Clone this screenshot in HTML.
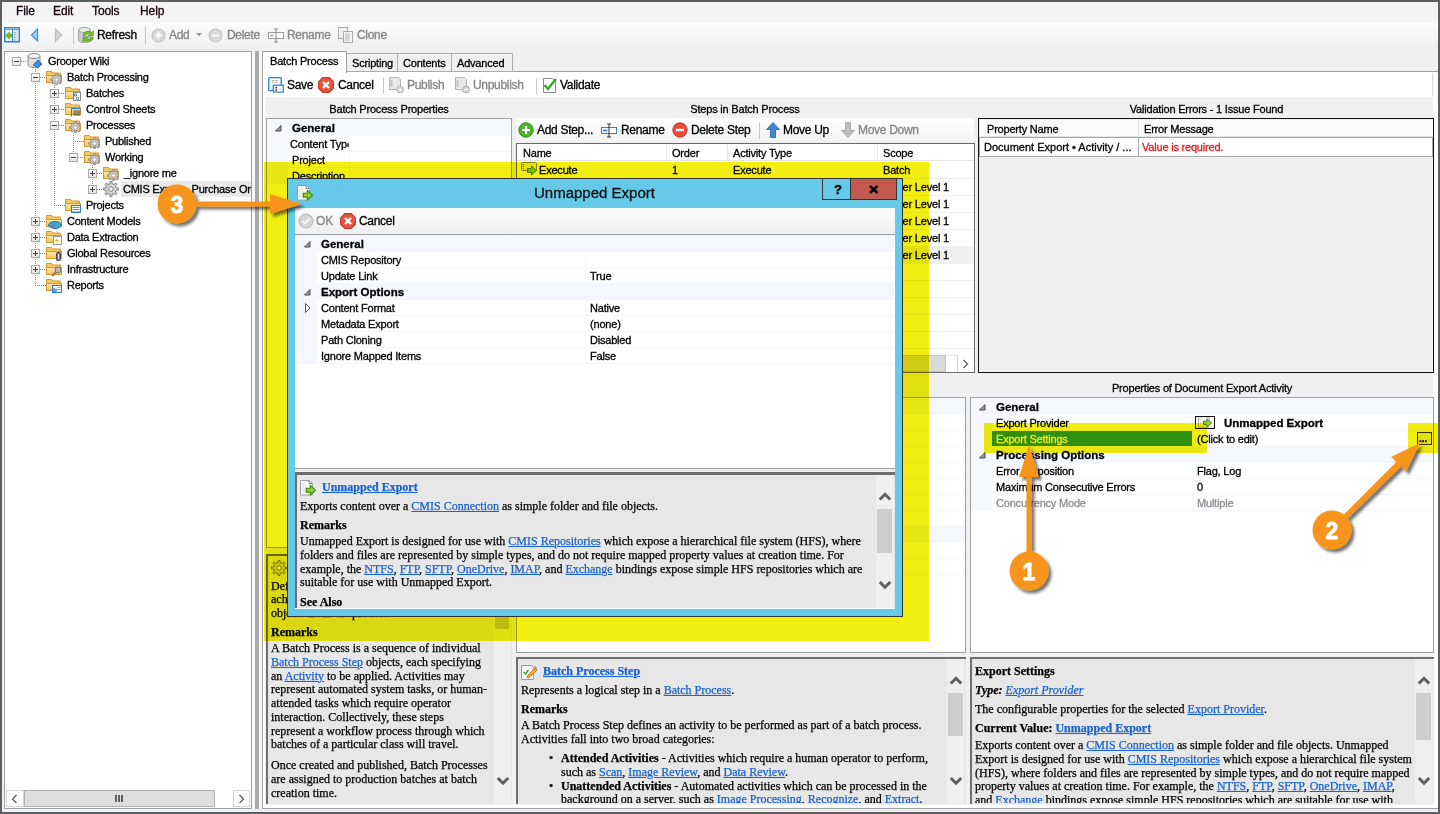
<!DOCTYPE html>
<html><head><meta charset="utf-8"><style>
*{margin:0;padding:0;box-sizing:border-box}
html,body{width:1440px;height:814px;overflow:hidden}
body{position:relative;background:#5d5e61;font-family:"Liberation Sans",sans-serif;font-size:11px;color:#000}
.a{position:absolute}
.t{position:absolute;white-space:nowrap;line-height:16px;letter-spacing:-0.2px;-webkit-text-stroke:0.3px currentColor}
.b{font-weight:bold;letter-spacing:0;font-size:11.5px}
.g{color:#858585}
.s{position:absolute;white-space:nowrap;font-family:"Liberation Serif",serif;font-size:12px;line-height:13.75px;letter-spacing:0;-webkit-text-stroke:0.25px currentColor}
.lk{color:#1a62cf;text-decoration:underline}
svg{position:absolute;overflow:visible}
.exp{position:absolute;width:9px;height:9px;border:1px solid #a8a8a8;background:linear-gradient(#fdfdfd,#e6e6e6)}
.exp:before{content:"";position:absolute;left:1px;top:3px;width:5px;height:1px;background:#3c3c3c}
.exp.p:after{content:"";position:absolute;left:3px;top:1px;width:1px;height:5px;background:#3c3c3c}
.dv{position:absolute;width:1px;background-image:linear-gradient(#8a8a8a 50%,transparent 50%);background-size:1px 2px}
.dh{position:absolute;height:1px;background-image:linear-gradient(90deg,#8a8a8a 50%,transparent 50%);background-size:2px 1px}
.sep{position:absolute;width:1px;background:#c8c8c8}
.help{position:absolute;background:#e7e7e7;border-top:2px solid #6e6e6e;border-left:2px solid #6e6e6e;overflow:hidden}
.tri{position:absolute;width:0;height:0}
</style></head><body>

<svg width="0" height="0" style="position:absolute">
<defs>
<linearGradient id="fold" x1="0" y1="0" x2="0" y2="1"><stop offset="0" stop-color="#fde9a8"/><stop offset="1" stop-color="#f3c15c"/></linearGradient>
<symbol id="folder" viewBox="0 0 16 16">
 <path d="M0.5,2.5 h5 l1.5,1.5 h7.5 v9.5 h-14z" fill="#f4c766" stroke="#d29a33"/>
 <path d="M0.5,6.5 h15 v7 h-15z" fill="url(#fold)" stroke="#d29a33"/>
</symbol>
<symbol id="gearov" viewBox="0 0 16 16">
 <path d="M9.68,6.38 L9.77,4.75 L11.23,4.75 L11.32,6.38 L12.83,7.01 L14.05,5.92 L15.08,6.95 L13.99,8.17 L14.62,9.68 L16.25,9.77 L16.25,11.23 L14.62,11.32 L13.99,12.83 L15.08,14.05 L14.05,15.08 L12.83,13.99 L11.32,14.62 L11.23,16.25 L9.77,16.25 L9.68,14.62 L8.17,13.99 L6.95,15.08 L5.92,14.05 L7.01,12.83 L6.38,11.32 L4.75,11.23 L4.75,9.77 L6.38,9.68 L7.01,8.17 L5.92,6.95 L6.95,5.92 L8.17,7.01Z" fill="#c9c9c9" stroke="#7e7e7e" stroke-width="0.8"/>
 <circle cx="10.5" cy="10.5" r="1.8" fill="#fff" stroke="#8a8a8a" stroke-width="0.6"/>
</symbol>
<symbol id="gearred" viewBox="0 0 16 16">
 <path d="M9.68,6.38 L9.77,4.75 L11.23,4.75 L11.32,6.38 L12.83,7.01 L14.05,5.92 L15.08,6.95 L13.99,8.17 L14.62,9.68 L16.25,9.77 L16.25,11.23 L14.62,11.32 L13.99,12.83 L15.08,14.05 L14.05,15.08 L12.83,13.99 L11.32,14.62 L11.23,16.25 L9.77,16.25 L9.68,14.62 L8.17,13.99 L6.95,15.08 L5.92,14.05 L7.01,12.83 L6.38,11.32 L4.75,11.23 L4.75,9.77 L6.38,9.68 L7.01,8.17 L5.92,6.95 L6.95,5.92 L8.17,7.01Z" fill="#c9c9c9" stroke="#7e7e7e" stroke-width="0.8"/>
 <circle cx="10.5" cy="10.5" r="1.8" fill="#fff" stroke="#8a8a8a" stroke-width="0.6"/><path d="M9,14 h3" stroke="#e07040" stroke-width="1.2"/>
</symbol>
<symbol id="gear" viewBox="0 0 16 16">
 <path d="M6.95,2.70 L7.05,0.46 L8.95,0.46 L9.05,2.70 L11.00,3.51 L12.66,1.99 L14.01,3.34 L12.49,5.00 L13.30,6.95 L15.54,7.05 L15.54,8.95 L13.30,9.05 L12.49,11.00 L14.01,12.66 L12.66,14.01 L11.00,12.49 L9.05,13.30 L8.95,15.54 L7.05,15.54 L6.95,13.30 L5.00,12.49 L3.34,14.01 L1.99,12.66 L3.51,11.00 L2.70,9.05 L0.46,8.95 L0.46,7.05 L2.70,6.95 L3.51,5.00 L1.99,3.34 L3.34,1.99 L5.00,3.51Z" fill="#d6d6d6" stroke="#7a7a7a" stroke-width="1"/>
 <circle cx="8" cy="8" r="2.3" fill="#fff" stroke="#7a7a7a" stroke-width="1"/>
</symbol>
<symbol id="db" viewBox="0 0 16 16">
 <path d="M1.5,3 v9 a6,2.5 0 0 0 12,0 v-9" fill="#dcdcdc" stroke="#8b8b8b"/>
 <ellipse cx="7.5" cy="3" rx="6" ry="2.5" fill="#efefef" stroke="#8b8b8b"/>
 <path d="M9,9 l4,-3 l2.5,2.5 l-3,4z" fill="#3c8fdc" stroke="#1e6bb8" stroke-width="0.8"/>
</symbol>
<symbol id="nav" viewBox="0 0 16 16">
 <rect x="0.75" y="0.75" width="14.5" height="14" fill="#fff" stroke="#2a86cf" stroke-width="1.5"/>
 <path d="M2,2.5 h12" stroke="#2a86cf" stroke-width="0.8"/>
 <rect x="9" y="3" width="5" height="11" fill="#e4e4e4"/>
 <path d="M8.5,2 v13" stroke="#2a86cf" stroke-width="1"/>
 <path d="M11,5 v1 M11,7.5 v1 M11,10 v1 M11,12.5 v1" stroke="#555" stroke-width="0.8"/>
 <path d="M1.5,8.5 l4,-4 v2.5 h2.5 v3 h-2.5 v2.5z" fill="#7cc11f" stroke="#5a9a10" stroke-width="0.5"/>
</symbol>
<symbol id="refresh" viewBox="0 0 16 16">
 <path d="M0.5,3 v10 a6,2.5 0 0 0 12,0 v-10" fill="#cfd3d8" stroke="#9aa0a6"/>
 <ellipse cx="6.5" cy="3" rx="6" ry="2.5" fill="#e9ecef" stroke="#9aa0a6"/>
 <path d="M0.5,7 a6,2.5 0 0 0 12,0 M0.5,10 a6,2.5 0 0 0 12,0" fill="none" stroke="#b0b5ba" stroke-width="0.6"/>
 <path d="M5,8.5 a5,4.5 0 0 1 8.5,-3 l1.8,-1.8 v5.3 h-5.3 l1.8,-1.8 a2.8,2.5 0 0 0 -4.6,1.3z" fill="#72c124" stroke="#4a9412" stroke-width="0.6"/>
 <path d="M15.3,10.5 a5,4.5 0 0 1 -8.5,3 l-1.8,1.8 v-5.3 h5.3 l-1.8,1.8 a2.8,2.5 0 0 0 4.6,-1.3z" fill="#72c124" stroke="#4a9412" stroke-width="0.6"/>
</symbol>
<symbol id="gplus" viewBox="0 0 16 16">
 <circle cx="8" cy="8" r="7" fill="#d9d9d9" stroke="#bdbdbd"/>
 <path d="M8,4.5 v7 M4.5,8 h7" stroke="#fff" stroke-width="2"/>
</symbol>
<symbol id="gminus" viewBox="0 0 16 16">
 <circle cx="8" cy="8" r="7" fill="#d9d9d9" stroke="#bdbdbd"/>
 <path d="M4.5,8 h7" stroke="#fff" stroke-width="2"/>
</symbol>
<symbol id="rename" viewBox="0 0 16 16">
 <rect x="0.5" y="5.5" width="15" height="6" fill="#fff" stroke="#9a9a9a"/>
 <path d="M8,2 v13 M6,2 h4 M6,15 h4" stroke="#8a8a8a"/>
 <path d="M2,7.5 h4 v2 h-4z" fill="#bbb"/>
</symbol>
<symbol id="renameb" viewBox="0 0 16 16">
 <rect x="0.5" y="5.5" width="15" height="6" fill="#fff" stroke="#3a7cc9"/>
 <path d="M8,2 v13 M6,2 h4 M6,15 h4" stroke="#333"/>
 <path d="M2,7.5 h4.5 v2 h-4.5z" fill="#4a90e2"/>
</symbol>
<symbol id="clone" viewBox="0 0 16 16">
 <rect x="0.5" y="0.5" width="9" height="11" fill="#f2f2f2" stroke="#aaa"/>
 <rect x="5.5" y="4.5" width="9" height="11" fill="#f2f2f2" stroke="#aaa"/>
 <path d="M7,7 h5 M7,9 h5 M7,11 h5 M7,13 h4" stroke="#bbb"/>
</symbol>
<symbol id="save" viewBox="0 0 16 16">
 <rect x="0.7" y="0.7" width="12.6" height="13" rx="1" fill="#e4f0fa" stroke="#2a86cf" stroke-width="1.3"/>
 <rect x="2.5" y="1.8" width="8.5" height="5" fill="#fff"/>
 <path d="M3.5,3.5 h3 M7.5,3.5 h2 M3.5,5.2 h2 M6.5,5.2 h3" stroke="#888" stroke-width="0.7"/>
 <rect x="5.3" y="8.3" width="10" height="6.8" fill="#fff" stroke="#2a86cf" stroke-width="1.2"/>
 <path d="M7.2,10.5 h2 M8.2,10.5 v3 M7.2,13.5 h2" stroke="#333" stroke-width="0.8"/>
 <path d="M10,12 h4" stroke="#ccc" stroke-width="0.8"/>
</symbol>
<symbol id="cancel" viewBox="0 0 16 16">
 <path d="M4.8,0.6 h6.4 l4.2,4.2 v6.4 l-4.2,4.2 h-6.4 l-4.2,-4.2 v-6.4z" fill="#e8533f" stroke="#c53a2a" stroke-width="1.1"/>
 <path d="M5,5 l6,6 M11,5 l-6,6" stroke="#fff" stroke-width="2.3"/>
</symbol>
<symbol id="publish" viewBox="0 0 16 16">
 <path d="M1.5,0.5 h9 l2,2 v10 h-11z" fill="#e9e9e9" stroke="#b0b0b0"/>
 <path d="M3.5,3 v7" stroke="#c3c3c3" stroke-width="2"/>
 <circle cx="12" cy="12.5" r="3.5" fill="#d2d2d2" stroke="#b5b5b5"/>
 <path d="M12,10.5 v4 M10,12.5 h4" stroke="#fff" stroke-width="1.2"/>
</symbol>
<symbol id="unpublish" viewBox="0 0 16 16">
 <path d="M1.5,0.5 h9 l2,2 v10 h-11z" fill="#e9e9e9" stroke="#b0b0b0"/>
 <path d="M3.5,3 v7" stroke="#c3c3c3" stroke-width="2"/>
 <circle cx="12" cy="12.5" r="3.5" fill="#d2d2d2" stroke="#b5b5b5"/>
 <path d="M10,12.5 h4" stroke="#fff" stroke-width="1.2"/>
</symbol>
<symbol id="validate" viewBox="0 0 16 16">
 <path d="M1.5,1.5 h9 l3,3 v11 h-12z" fill="#fff" stroke="#8a8a8a"/>
 <path d="M2.5,8 l3.5,4 l8,-10" fill="none" stroke="#3aa12e" stroke-width="2.4"/>
</symbol>
<symbol id="addstep" viewBox="0 0 16 16">
 <circle cx="8" cy="8" r="7.2" fill="#4fb52c" stroke="#2f8f16"/>
 <path d="M8,4 v8 M4,8 h8" stroke="#fff" stroke-width="2.2"/>
</symbol>
<symbol id="delstep" viewBox="0 0 16 16">
 <circle cx="8" cy="8" r="7.2" fill="#e74c3c" stroke="#c0392b"/>
 <path d="M4,8 h8" stroke="#fff" stroke-width="2.4"/>
</symbol>
<symbol id="moveup" viewBox="0 0 16 16">
 <path d="M8,0.5 l6.5,7 h-4 v8 h-5 v-8 h-4z" fill="#3f86d6" stroke="#1f5fa8" stroke-width="0.8"/>
</symbol>
<symbol id="movedown" viewBox="0 0 16 16">
 <path d="M8,15.5 l6.5,-7 h-4 v-8 h-5 v8 h-4z" fill="#bdbdbd" stroke="#a0a0a0" stroke-width="0.8"/>
</symbol>
<symbol id="execute" viewBox="0 0 16 16">
 <rect x="0.5" y="0.5" width="15" height="8" rx="1" fill="#f2f2f2" stroke="#8a8a8a"/>
 <circle cx="2.3" cy="2.3" r="0.6" fill="#555"/><circle cx="2.3" cy="4.4" r="0.6" fill="#555"/><circle cx="2.3" cy="6.5" r="0.6" fill="#555"/>
 <path d="M6.5,6.5 h4 v-2.5 l5,4.5 l-5,4.5 v-2.5 h-4z" fill="#8dc63f" stroke="#3f8a12" stroke-width="1"/>
</symbol>
<symbol id="export" viewBox="0 0 16 16">
 <path d="M0.5,0.5 h9 l3,3 v11.5 h-12z" fill="#fbfbfb" stroke="#9d9d9d"/>
 <rect x="2" y="2" width="4" height="11" fill="#ececec"/>
 <path d="M9,1 v2.5 h3" fill="none" stroke="#777" stroke-width="0.9"/>
 <path d="M6.3,8.3 h4 v-2.8 l5.2,4.7 l-5.2,4.7 v-2.8 h-4z" fill="#9ad12a" stroke="#2f8a0e" stroke-width="1.1"/>
</symbol>
<symbol id="pencildoc" viewBox="0 0 16 16">
 <path d="M0.5,1.5 h10 l2,2 v12 h-12z" fill="#fafafa" stroke="#9a9a9a"/>
 <path d="M2.5,8 l2,2 l3,-4" fill="none" stroke="#3aa12e" stroke-width="1.4"/>
 <path d="M6,14 l1,-3 l7,-7 l2,2 l-7,7z" fill="#f4a23a" stroke="#b86f15" stroke-width="0.7"/>
 <path d="M13,3 l2,2 l1,-1 l-2,-2z" fill="#e0608a"/>
</symbol>
<symbol id="okg" viewBox="0 0 16 16">
 <circle cx="8" cy="8" r="7" fill="#d5d5d5" stroke="#b5b5b5"/>
 <path d="M4.5,8 l2.5,2.5 l4.5,-5" fill="none" stroke="#fff" stroke-width="1.8"/>
</symbol>
<symbol id="dbwiki" viewBox="0 0 16 16">
 <path d="M1,3 v9 a6,2.5 0 0 0 12,0 v-9" fill="#e0e0e0" stroke="#8b8b8b"/>
 <ellipse cx="7" cy="3" rx="6" ry="2.5" fill="#f3f3f3" stroke="#8b8b8b"/>
 <path d="M6,12 l5,-5 l4,4 l-4,4z" fill="#3a90e0" stroke="#1c62ae" stroke-width="0.8"/>
</symbol>
<symbol id="ov_batch" viewBox="0 0 16 16">
 <rect x="8.5" y="7.5" width="7" height="8" fill="#fff" stroke="#888"/>
 <circle cx="10.5" cy="10" r="1.2" fill="none" stroke="#2a78d0"/>
 <circle cx="12.5" cy="13.5" r="1.2" fill="none" stroke="#2a78d0"/>
</symbol>
<symbol id="ov_ctrl" viewBox="0 0 16 16">
 <path d="M6.5,15.5 v-8 h9" fill="none" stroke="#2a78d0"/>
 <path d="M8.5,10 h7 M8.5,12 h7 M8.5,14 h7" stroke="#444"/>
</symbol>
<symbol id="ov_proj" viewBox="0 0 16 16">
 <rect x="6.5" y="8.5" width="9" height="7" fill="#fff" stroke="#2a78d0"/>
 <path d="M7.5,10.5 h7 M7.5,12.5 h7" stroke="#5a8fd0"/>
 <path d="M7.5,14.5 h7" stroke="#d05050" stroke-dasharray="1 1"/>
</symbol>
<symbol id="ov_cm" viewBox="0 0 16 16">
 <ellipse cx="9" cy="12" rx="6.5" ry="3.5" fill="#3fa7d8" stroke="#1c7ab0"/>
 <path d="M5,13 h4" stroke="#d04040"/>
</symbol>
<symbol id="ov_de" viewBox="0 0 16 16">
 <rect x="7.5" y="7.5" width="8" height="8" fill="#fff" stroke="#999"/>
 <path d="M12,8 l-3,4 h2 l-1,3 l3,-4 h-2z" fill="#f0b020"/>
</symbol>
<symbol id="ov_gr" viewBox="0 0 16 16">
 <rect x="10.5" y="7.5" width="4" height="8" rx="1" fill="#777" stroke="#444"/>
 <path d="M12.5,9 v5" stroke="#ddd"/>
</symbol>
<symbol id="ov_inf" viewBox="0 0 16 16">
 <path d="M6,15 l5,-5" stroke="#b07a3a" stroke-width="2.4"/>
 <circle cx="12" cy="9" r="3" fill="#bbb" stroke="#777"/>
</symbol>
<symbol id="ov_rep" viewBox="0 0 16 16">
 <rect x="6.5" y="8.5" width="9" height="7" fill="#fff" stroke="#2a78d0"/>
 <path d="M8,11 v4 M10,12 v3" stroke="#2a78d0" stroke-width="1.4"/>
 <path d="M11.5,10.5 h3 M11.5,12.5 h3" stroke="#999"/>
</symbol>
</defs></svg>
<div class="a" style="left:2px;top:2px;width:1436px;height:810px;background:#f0f0f0"></div>
<div class="a" style="left:2px;top:2px;width:1436px;height:21px;background:#f4f4f4"></div>
<div class="a" style="left:2px;top:23px;width:1436px;height:25px;background:linear-gradient(#fbfbfb,#f0f0f0)"></div>
<div class="t" style="left:16px;top:2px;line-height:18px;font-size:12px;letter-spacing:-0.1px;color:#1a0010">File</div>
<div class="t" style="left:53px;top:2px;line-height:18px;font-size:12px;letter-spacing:-0.1px;color:#1a0010">Edit</div>
<div class="t" style="left:92px;top:2px;line-height:18px;font-size:12px;letter-spacing:-0.1px;color:#1a0010">Tools</div>
<div class="t" style="left:140px;top:2px;line-height:18px;font-size:12px;letter-spacing:-0.1px;color:#1a0010">Help</div>
<svg style="left:4px;top:27px" width="16" height="16"><use href="#nav"/></svg>
<svg style="left:30px;top:28px" width="10" height="15"><path d="M7.5,1 v12 l-6,-6z" fill="#a9d0f2" stroke="#3f8fd8" stroke-width="1.2"/></svg>
<svg style="left:54px;top:28px" width="10" height="15"><path d="M1.5,1 v12 l6,-6z" fill="#d5d5d5" stroke="#bdbdbd" stroke-width="1.2"/></svg>
<div class="a" style="left:73px;top:27px;width:1px;height:17px;background:#c5c5c5"></div>
<svg style="left:78px;top:27px" width="16" height="16"><use href="#refresh"/></svg>
<div class="t" style="left:97px;top:27px;font-size:12px;letter-spacing:-0.3px">Refresh</div>
<div class="a" style="left:145px;top:27px;width:1px;height:17px;background:#c5c5c5"></div>
<svg style="left:151px;top:28px" width="15" height="15"><use href="#gplus"/></svg>
<div class="t g" style="left:169px;top:27px;font-size:12px;letter-spacing:-0.3px">Add</div>
<svg style="left:196px;top:33px" width="7" height="4"><path d="M0,0 h6 l-3,3z" fill="#909090"/></svg>
<svg style="left:208px;top:28px" width="15" height="15"><use href="#gminus"/></svg>
<div class="t g" style="left:227px;top:27px;font-size:12px;letter-spacing:-0.3px">Delete</div>
<svg style="left:268px;top:27px" width="16" height="16"><use href="#rename"/></svg>
<div class="t g" style="left:287px;top:27px;font-size:12px;letter-spacing:-0.3px">Rename</div>
<svg style="left:338px;top:27px" width="16" height="16"><use href="#clone"/></svg>
<div class="t g" style="left:357px;top:27px;font-size:12px;letter-spacing:-0.3px">Clone</div>
<div class="a" style="left:4px;top:51px;width:248px;height:758px;background:#fff;border:1px solid #9fa3a9"></div>
<div class="a" style="left:5px;top:790px;width:246px;height:17px;background:#fff"></div>
<div class="a" style="left:6px;top:790px;width:18px;height:17px;border:1px solid #d4d4d4;background:#fff"></div>
<svg style="left:11px;top:794px" width="8" height="10"><path d="M5.5,1 l-4,4 l4,4" fill="none" stroke="#606060" stroke-width="1.4"/></svg>
<div class="a" style="left:24px;top:790px;width:191px;height:17px;border:1px solid #b0b0b0;background:#dedede"></div>
<div class="a" style="left:115px;top:795px;width:2px;height:7px;background:#606060"></div>
<div class="a" style="left:118px;top:795px;width:2px;height:7px;background:#606060"></div>
<div class="a" style="left:121px;top:795px;width:2px;height:7px;background:#606060"></div>
<div class="a" style="left:233px;top:790px;width:17px;height:17px;border:1px solid #d4d4d4;background:#fff"></div>
<svg style="left:238px;top:794px" width="8" height="10"><path d="M1.5,1 l4,4 l-4,4" fill="none" stroke="#606060" stroke-width="1.4"/></svg>
<div class="a" style="left:121px;top:181px;width:130px;height:16px;background:#e9e9e9"></div>
<div class="dv" style="left:35px;top:69px;height:217px"></div>
<div class="dv" style="left:54px;top:85px;height:121px"></div>
<div class="dv" style="left:73px;top:133px;height:25px"></div>
<div class="dv" style="left:92px;top:165px;height:25px"></div>
<div class="dh" style="left:21px;top:61px;width:6px"></div>
<div class="exp" style="left:12px;top:57px"></div>
<svg style="left:27px;top:53px" width="16" height="16"><use href="#dbwiki"/></svg>
<div class="t" style="left:48px;top:53px;letter-spacing:-0.25px">Grooper Wiki</div>
<div class="dh" style="left:40px;top:77px;width:6px"></div>
<div class="exp" style="left:31px;top:73px"></div>
<svg style="left:46px;top:69px" width="16" height="16"><use href="#folder"/></svg>
<svg style="left:46px;top:69px" width="16" height="16"><use href="#gearov"/></svg>
<div class="t" style="left:67px;top:69px;letter-spacing:-0.25px">Batch Processing</div>
<div class="dh" style="left:59px;top:93px;width:6px"></div>
<div class="exp p" style="left:50px;top:89px"></div>
<svg style="left:65px;top:85px" width="16" height="16"><use href="#folder"/></svg>
<svg style="left:65px;top:85px" width="16" height="16"><use href="#ov_batch"/></svg>
<div class="t" style="left:86px;top:85px;letter-spacing:-0.25px">Batches</div>
<div class="dh" style="left:59px;top:109px;width:6px"></div>
<div class="exp p" style="left:50px;top:105px"></div>
<svg style="left:65px;top:101px" width="16" height="16"><use href="#folder"/></svg>
<svg style="left:65px;top:101px" width="16" height="16"><use href="#ov_ctrl"/></svg>
<div class="t" style="left:86px;top:101px;letter-spacing:-0.25px">Control Sheets</div>
<div class="dh" style="left:59px;top:125px;width:6px"></div>
<div class="exp" style="left:50px;top:121px"></div>
<svg style="left:65px;top:117px" width="16" height="16"><use href="#folder"/></svg>
<svg style="left:65px;top:117px" width="16" height="16"><use href="#gearred"/></svg>
<div class="t" style="left:86px;top:117px;letter-spacing:-0.25px">Processes</div>
<div class="dh" style="left:73px;top:141px;width:11px"></div>
<svg style="left:84px;top:133px" width="16" height="16"><use href="#folder"/></svg>
<svg style="left:84px;top:133px" width="16" height="16"><use href="#gearred"/></svg>
<div class="t" style="left:105px;top:133px;letter-spacing:-0.25px">Published</div>
<div class="dh" style="left:78px;top:157px;width:6px"></div>
<div class="exp" style="left:69px;top:153px"></div>
<svg style="left:84px;top:149px" width="16" height="16"><use href="#folder"/></svg>
<svg style="left:84px;top:149px" width="16" height="16"><use href="#gearred"/></svg>
<div class="t" style="left:105px;top:149px;letter-spacing:-0.25px">Working</div>
<div class="dh" style="left:97px;top:173px;width:6px"></div>
<div class="exp p" style="left:88px;top:169px"></div>
<svg style="left:103px;top:165px" width="16" height="16"><use href="#folder"/></svg>
<svg style="left:103px;top:165px" width="16" height="16"><use href="#gearred"/></svg>
<div class="t" style="left:124px;top:165px;letter-spacing:-0.25px">_ignore me</div>
<div class="dh" style="left:97px;top:189px;width:6px"></div>
<div class="exp p" style="left:88px;top:185px"></div>
<svg style="left:103px;top:181px" width="16" height="16"><use href="#gear"/></svg>
<div class="t" style="left:123px;top:181px;letter-spacing:-0.25px;width:128px;overflow:hidden">CMIS Export - Purchase Orders</div>
<div class="dh" style="left:54px;top:205px;width:11px"></div>
<svg style="left:65px;top:197px" width="16" height="16"><use href="#folder"/></svg>
<svg style="left:65px;top:197px" width="16" height="16"><use href="#ov_proj"/></svg>
<div class="t" style="left:86px;top:197px;letter-spacing:-0.25px">Projects</div>
<div class="dh" style="left:40px;top:221px;width:6px"></div>
<div class="exp p" style="left:31px;top:217px"></div>
<svg style="left:46px;top:213px" width="16" height="16"><use href="#folder"/></svg>
<svg style="left:46px;top:213px" width="16" height="16"><use href="#ov_cm"/></svg>
<div class="t" style="left:67px;top:213px;letter-spacing:-0.25px">Content Models</div>
<div class="dh" style="left:40px;top:237px;width:6px"></div>
<div class="exp p" style="left:31px;top:233px"></div>
<svg style="left:46px;top:229px" width="16" height="16"><use href="#folder"/></svg>
<svg style="left:46px;top:229px" width="16" height="16"><use href="#ov_de"/></svg>
<div class="t" style="left:67px;top:229px;letter-spacing:-0.25px">Data Extraction</div>
<div class="dh" style="left:40px;top:253px;width:6px"></div>
<div class="exp p" style="left:31px;top:249px"></div>
<svg style="left:46px;top:245px" width="16" height="16"><use href="#folder"/></svg>
<svg style="left:46px;top:245px" width="16" height="16"><use href="#ov_gr"/></svg>
<div class="t" style="left:67px;top:245px;letter-spacing:-0.25px">Global Resources</div>
<div class="dh" style="left:40px;top:269px;width:6px"></div>
<div class="exp p" style="left:31px;top:265px"></div>
<svg style="left:46px;top:261px" width="16" height="16"><use href="#folder"/></svg>
<svg style="left:46px;top:261px" width="16" height="16"><use href="#ov_inf"/></svg>
<div class="t" style="left:67px;top:261px;letter-spacing:-0.25px">Infrastructure</div>
<div class="dh" style="left:35px;top:285px;width:11px"></div>
<svg style="left:46px;top:277px" width="16" height="16"><use href="#folder"/></svg>
<svg style="left:46px;top:277px" width="16" height="16"><use href="#ov_rep"/></svg>
<div class="t" style="left:67px;top:277px;letter-spacing:-0.25px">Reports</div>
<div class="a" style="left:251px;top:52px;width:1px;height:700px;background:#9fa3a9"></div>
<div class="a" style="left:255px;top:51px;width:4px;height:758px;background:#a9a9a9"></div>
<div class="a" style="left:252px;top:51px;width:3px;height:758px;background:#f7f7f7"></div>
<div class="a" style="left:259px;top:51px;width:3px;height:758px;background:#f5f5f5"></div>
<div class="a" style="left:262px;top:71px;width:1176px;height:738px;background:#fff;border:1px solid #a0a0a0;border-right:none"></div>
<div class="a" style="left:346px;top:53px;width:52px;height:19px;background:#f0f0f0;border:1px solid #acacac"></div>
<div class="t" style="left:352px;top:55px;">Scripting</div>
<div class="a" style="left:397px;top:53px;width:55px;height:19px;background:#f0f0f0;border:1px solid #acacac"></div>
<div class="t" style="left:403px;top:55px;">Contents</div>
<div class="a" style="left:451px;top:53px;width:62px;height:19px;background:#f0f0f0;border:1px solid #acacac"></div>
<div class="t" style="left:457px;top:55px;">Advanced</div>
<div class="a" style="left:262px;top:51px;width:85px;height:22px;background:#fff;border:1px solid #a0a0a0;border-bottom:none"></div>
<div class="t" style="left:270px;top:53px;">Batch Process</div>
<svg style="left:268px;top:77px" width="16" height="16"><use href="#save"/></svg>
<div class="t" style="left:287px;top:77px;font-size:12px;letter-spacing:-0.3px">Save</div>
<svg style="left:318px;top:77px" width="16" height="16"><use href="#cancel"/></svg>
<div class="t" style="left:338px;top:77px;font-size:12px;letter-spacing:-0.3px">Cancel</div>
<div class="a" style="left:383px;top:78px;width:1px;height:16px;background:#c8c8c8"></div>
<svg style="left:388px;top:77px" width="16" height="16"><use href="#publish"/></svg>
<div class="t g" style="left:407px;top:77px;font-size:12px;letter-spacing:-0.3px">Publish</div>
<svg style="left:454px;top:77px" width="16" height="16"><use href="#unpublish"/></svg>
<div class="t g" style="left:473px;top:77px;font-size:12px;letter-spacing:-0.3px">Unpublish</div>
<div class="a" style="left:536px;top:78px;width:1px;height:16px;background:#c8c8c8"></div>
<svg style="left:542px;top:77px" width="16" height="16"><use href="#validate"/></svg>
<div class="t" style="left:560px;top:77px;font-size:12px;letter-spacing:-0.3px">Validate</div>
<div class="a" style="left:265px;top:97px;width:1168px;height:708px;background:#f0f0f0"></div>
<div class="a" style="left:1432px;top:73px;width:1px;height:23px;background:#d8d8d8"></div>
<div class="t" style="left:266px;top:101px;width:246px;text-align:center">Batch Process Properties</div>
<div class="t" style="left:516px;top:101px;width:458px;text-align:center">Steps in Batch Process</div>
<div class="t" style="left:979px;top:101px;width:455px;text-align:center">Validation Errors - 1 Issue Found</div>
<div class="t" style="left:970px;top:380px;width:464px;text-align:center">Properties of Document Export Activity</div>
<div class="a" style="left:266px;top:118px;width:246px;height:430px;background:#fff;border:1px solid #a0a0a0"></div>
<div class="a" style="left:267px;top:119px;width:21px;height:65px;background:#f4f7fc"></div>
<div class="a" style="left:267px;top:119px;width:244px;height:17px;background:#f4f7fc"></div>
<svg style="left:275px;top:125px" width="7" height="7"><path d="M6,0.5 v5.5 h-5.5z" fill="#9a9a9a" stroke="#404040" stroke-width="0.9"/></svg>
<div class="t b" style="left:292px;top:120px;">General</div>
<div class="a" style="left:288px;top:151px;width:223px;height:1px;background:#f4f7fc"></div>
<div class="a" style="left:349px;top:136px;width:1px;height:15px;background:#f4f7fc"></div>
<div class="t" style="left:292px;top:136px;">Content Typ</div>
<div class="a" style="left:288px;top:167px;width:223px;height:1px;background:#f4f7fc"></div>
<div class="a" style="left:349px;top:152px;width:1px;height:15px;background:#f4f7fc"></div>
<div class="t" style="left:292px;top:152px;">Project</div>
<div class="a" style="left:288px;top:183px;width:223px;height:1px;background:#f4f7fc"></div>
<div class="a" style="left:349px;top:168px;width:1px;height:15px;background:#f4f7fc"></div>
<div class="t" style="left:292px;top:168px;">Description</div>
<div class="a" style="left:290px;top:136px;width:58px;height:15px;background:#fff"></div>
<div class="t" style="left:290px;top:136px;"><span style="display:inline-block;width:58px;overflow:hidden">Content Type</span></div>
<div class="help" style="left:266px;top:554px;width:246px;height:250px"></div>
<div class="a" style="left:494px;top:556px;width:17px;height:248px;background:#efefef"></div>
<div class="a" style="left:495px;top:617px;width:14px;height:12px;background:#c8c8c8"></div>
<svg style="left:497px;top:777px" width="12" height="8"><path d="M0.8,1 l5.2,5.2 l5.2,-5.2" fill="none" stroke="#5e5e5e" stroke-width="3"/></svg>
<svg style="left:271px;top:560px" width="16" height="16"><use href="#gear"/></svg>
<div class="s" style="left:271px;top:580px;line-height:13.4px">Defines a sequence of activities which<br>achieve a processing workflow for batch<br>objects from the process.</div>
<div class="s b" style="left:271px;top:626px">Remarks</div>
<div class="s" style="left:271px;top:642px">A Batch Process is a sequence of individual<br><span class="lk">Batch Process Step</span> objects, each specifying<br>an <span class="lk">Activity</span> to be applied. Activities may<br>represent automated system tasks, or human-<br>attended tasks which require operator<br>interaction. Collectively, these steps<br>represent a workflow process through which<br>batches of a particular class will travel.</div>
<div class="s" style="left:271px;top:759px">Once created and published, Batch Processes<br>are assigned to production batches at batch<br>creation time.</div>
<div class="a" style="left:516px;top:118px;width:458px;height:24px;background:linear-gradient(#fefefe,#f3f3f3);border-radius:2px"></div>
<svg style="left:518px;top:122px" width="16" height="16"><use href="#addstep"/></svg>
<div class="t" style="left:537px;top:122px;font-size:12px;letter-spacing:-0.3px">Add Step...</div>
<svg style="left:601px;top:122px" width="16" height="16"><use href="#renameb"/></svg>
<div class="t" style="left:621px;top:122px;font-size:12px;letter-spacing:-0.3px">Rename</div>
<svg style="left:672px;top:122px" width="16" height="16"><use href="#delstep"/></svg>
<div class="t" style="left:691px;top:122px;font-size:12px;letter-spacing:-0.3px">Delete Step</div>
<div class="a" style="left:759px;top:122px;width:1px;height:17px;background:#c8c8c8"></div>
<svg style="left:765px;top:122px" width="16" height="16"><use href="#moveup"/></svg>
<div class="t" style="left:783px;top:122px;font-size:12px;letter-spacing:-0.3px">Move Up</div>
<svg style="left:840px;top:122px" width="16" height="16"><use href="#movedown"/></svg>
<div class="t g" style="left:858px;top:122px;font-size:12px;letter-spacing:-0.3px">Move Down</div>
<div class="a" style="left:516px;top:143px;width:459px;height:230px;background:#fff;border:1px solid #6a6a6a"></div>
<div class="a" style="left:517px;top:144px;width:457px;height:17px;background:#fff;border-bottom:1px solid #e5e5e5"></div>
<div class="a" style="left:666px;top:144px;width:1px;height:17px;background:#e5e5e5"></div>
<div class="a" style="left:727px;top:144px;width:1px;height:17px;background:#e5e5e5"></div>
<div class="a" style="left:877px;top:144px;width:1px;height:17px;background:#e5e5e5"></div>
<div class="t" style="left:523px;top:145px;">Name</div>
<div class="t" style="left:672px;top:145px;">Order</div>
<div class="t" style="left:733px;top:145px;">Activity Type</div>
<div class="t" style="left:883px;top:145px;">Scope</div>
<div class="a" style="left:517px;top:178px;width:457px;height:1px;background:#f0f0f0"></div>
<div class="a" style="left:517px;top:195px;width:457px;height:1px;background:#f0f0f0"></div>
<div class="a" style="left:517px;top:212px;width:457px;height:1px;background:#f0f0f0"></div>
<div class="a" style="left:517px;top:229px;width:457px;height:1px;background:#f0f0f0"></div>
<div class="a" style="left:517px;top:246px;width:457px;height:1px;background:#f0f0f0"></div>
<div class="a" style="left:517px;top:246px;width:457px;height:17px;background:#f0f0f0"></div>
<div class="a" style="left:517px;top:263px;width:457px;height:1px;background:#f0f0f0"></div>
<div class="a" style="left:517px;top:280px;width:457px;height:1px;background:#f0f0f0"></div>
<div class="a" style="left:517px;top:297px;width:457px;height:1px;background:#f0f0f0"></div>
<div class="a" style="left:517px;top:314px;width:457px;height:1px;background:#f0f0f0"></div>
<div class="a" style="left:517px;top:331px;width:457px;height:1px;background:#f0f0f0"></div>
<div class="a" style="left:517px;top:348px;width:457px;height:1px;background:#f0f0f0"></div>
<svg style="left:521px;top:162px" width="16" height="16"><use href="#execute"/></svg>
<div class="t" style="left:539px;top:162px;">Execute</div>
<div class="t" style="left:672px;top:162px;">1</div>
<div class="t" style="left:733px;top:162px;">Execute</div>
<div class="t" style="left:883px;top:162px;">Batch</div>
<div class="t" style="left:882px;top:179px;">Folder Level 1</div>
<div class="t" style="left:882px;top:196px;">Folder Level 1</div>
<div class="t" style="left:882px;top:213px;">Folder Level 1</div>
<div class="t" style="left:882px;top:230px;">Folder Level 1</div>
<div class="t" style="left:882px;top:247px;">Folder Level 1</div>
<div class="a" style="left:517px;top:355px;width:457px;height:17px;background:#fff;border-top:1px solid #e8e8e8"></div>
<div class="a" style="left:517px;top:355px;width:429px;height:17px;background:#dadada;border:1px solid #c4c4c4"></div>
<div class="a" style="left:957px;top:355px;width:17px;height:17px;border-left:1px solid #d0d0d0;background:#fff"></div>
<svg style="left:962px;top:359px" width="8" height="10"><path d="M1.5,1 l4,4 l-4,4" fill="none" stroke="#606060" stroke-width="1.4"/></svg>
<div class="a" style="left:978px;top:118px;width:456px;height:255px;background:#f0f0f0;border:1px solid #111"></div>
<div class="a" style="left:980px;top:120px;width:453px;height:17px;background:#fbfbfb;border-bottom:1px solid #e3e3e3"></div>
<div class="a" style="left:1138px;top:120px;width:1px;height:17px;background:#e0e0e0"></div>
<div class="t" style="left:987px;top:121px;">Property Name</div>
<div class="t" style="left:1144px;top:121px;">Error Message</div>
<div class="a" style="left:979px;top:137px;width:454px;height:20px;background:#fff;border:1px solid #a9a9a9"></div>
<div class="a" style="left:1138px;top:137px;width:1px;height:20px;background:#a9a9a9"></div>
<div class="t" style="left:984px;top:139px;letter-spacing:0">Document Export &#8226; Activity / ...</div>
<div class="t" style="left:1142px;top:139px;color:#f0141e">Value is required.</div>
<div class="a" style="left:516px;top:397px;width:450px;height:256px;background:#fff;border:1px solid #a0a0a0"></div>
<div class="a" style="left:517px;top:398px;width:21px;height:177px;background:#f4f7fc"></div>
<div class="a" style="left:517px;top:398px;width:448px;height:17px;background:#f4f7fc"></div>
<svg style="left:525px;top:404px" width="7" height="7"><path d="M6,0.5 v5.5 h-5.5z" fill="#9a9a9a" stroke="#404040" stroke-width="0.9"/></svg>
<div class="t b" style="left:542px;top:399px;"></div>
<div class="a" style="left:538px;top:430px;width:427px;height:1px;background:#f4f7fc"></div>
<div class="a" style="left:766px;top:415px;width:1px;height:15px;background:#f4f7fc"></div>
<div class="t" style="left:542px;top:415px;"></div>
<div class="a" style="left:538px;top:446px;width:427px;height:1px;background:#f4f7fc"></div>
<div class="a" style="left:766px;top:431px;width:1px;height:15px;background:#f4f7fc"></div>
<div class="t" style="left:542px;top:431px;"></div>
<div class="a" style="left:538px;top:462px;width:427px;height:1px;background:#f4f7fc"></div>
<div class="a" style="left:766px;top:447px;width:1px;height:15px;background:#f4f7fc"></div>
<div class="t" style="left:542px;top:447px;"></div>
<div class="a" style="left:538px;top:478px;width:427px;height:1px;background:#f4f7fc"></div>
<div class="a" style="left:766px;top:463px;width:1px;height:15px;background:#f4f7fc"></div>
<div class="t" style="left:542px;top:463px;"></div>
<div class="a" style="left:538px;top:494px;width:427px;height:1px;background:#f4f7fc"></div>
<div class="a" style="left:766px;top:479px;width:1px;height:15px;background:#f4f7fc"></div>
<div class="t" style="left:542px;top:479px;"></div>
<div class="a" style="left:538px;top:510px;width:427px;height:1px;background:#f4f7fc"></div>
<div class="a" style="left:766px;top:495px;width:1px;height:15px;background:#f4f7fc"></div>
<div class="t" style="left:542px;top:495px;"></div>
<div class="a" style="left:538px;top:526px;width:427px;height:1px;background:#f4f7fc"></div>
<div class="a" style="left:766px;top:511px;width:1px;height:15px;background:#f4f7fc"></div>
<div class="t" style="left:542px;top:511px;"></div>
<div class="a" style="left:517px;top:527px;width:448px;height:16px;background:#f4f7fc"></div>
<div class="a" style="left:538px;top:558px;width:427px;height:1px;background:#f4f7fc"></div>
<div class="a" style="left:766px;top:543px;width:1px;height:15px;background:#f4f7fc"></div>
<div class="t" style="left:542px;top:543px;"></div>
<div class="a" style="left:538px;top:574px;width:427px;height:1px;background:#f4f7fc"></div>
<div class="a" style="left:766px;top:559px;width:1px;height:15px;background:#f4f7fc"></div>
<div class="t" style="left:542px;top:559px;"></div>
<div class="help" style="left:516px;top:657px;width:450px;height:147px"></div>
<div class="a" style="left:947px;top:659px;width:17px;height:145px;background:#efefef"></div>
<div class="a" style="left:948px;top:693px;width:15px;height:43px;background:#cdcdcd"></div>
<svg style="left:950px;top:676px" width="12" height="8"><path d="M0.8,7.5 l5.2,-5.2 l5.2,5.2" fill="none" stroke="#5e5e5e" stroke-width="3"/></svg>
<svg style="left:950px;top:777px" width="12" height="8"><path d="M0.8,1 l5.2,5.2 l5.2,-5.2" fill="none" stroke="#5e5e5e" stroke-width="3"/></svg>
<svg style="left:521px;top:664px" width="16" height="16"><use href="#pencildoc"/></svg>
<div class="s b" style="left:543px;top:665px"><span class="lk">Batch Process Step</span></div>
<div class="s" style="left:521px;top:684px">Represents a logical step in a <span class="lk">Batch Process</span>.</div>
<div class="s b" style="left:521px;top:703px">Remarks</div>
<div class="s" style="left:521px;top:719px">A Batch Process Step defines an activity to be performed as part of a batch process.<br>Activities fall into two broad categories:</div>
<div class="s" style="left:549px;top:752px;width:400px;height:51px;overflow:hidden">&#8226;<br><br>&#8226;</div>
<div class="s" style="left:561px;top:752px;width:385px;height:51px;overflow:hidden"><b>Attended Activities</b> - Activities which require a human operator to perform,<br>such as <span class="lk">Scan</span>, <span class="lk">Image Review</span>, and <span class="lk">Data Review</span>.<br><b>Unattended Activities</b> - Automated activities which can be processed in the<br>background on a server, such as <span class="lk">Image Processing</span>, <span class="lk">Recognize</span>, and <span class="lk">Extract</span>.</div>
<div class="a" style="left:970px;top:397px;width:464px;height:256px;background:#fff;border:1px solid #a0a0a0"></div>
<div class="a" style="left:971px;top:398px;width:21px;height:113px;background:#f4f7fc"></div>
<div class="a" style="left:971px;top:398px;width:462px;height:17px;background:#f4f7fc"></div>
<svg style="left:979px;top:404px" width="7" height="7"><path d="M6,0.5 v5.5 h-5.5z" fill="#9a9a9a" stroke="#404040" stroke-width="0.9"/></svg>
<div class="t b" style="left:996px;top:399px;">General</div>
<div class="a" style="left:992px;top:430px;width:441px;height:1px;background:#f4f7fc"></div>
<div class="a" style="left:1192px;top:415px;width:1px;height:15px;background:#f4f7fc"></div>
<div class="t" style="left:996px;top:415px;">Export Provider</div>
<div class="a" style="left:992px;top:446px;width:441px;height:1px;background:#f4f7fc"></div>
<div class="a" style="left:1192px;top:431px;width:1px;height:15px;background:#f4f7fc"></div>
<div class="t" style="left:996px;top:431px;">Export Settings</div>
<div class="t" style="left:1197px;top:431px;">(Click to edit)</div>
<div class="a" style="left:971px;top:447px;width:462px;height:16px;background:#f4f7fc"></div>
<svg style="left:979px;top:452px" width="7" height="7"><path d="M6,0.5 v5.5 h-5.5z" fill="#9a9a9a" stroke="#404040" stroke-width="0.9"/></svg>
<div class="t b" style="left:996px;top:447px;">Processing Options</div>
<div class="a" style="left:992px;top:478px;width:441px;height:1px;background:#f4f7fc"></div>
<div class="a" style="left:1192px;top:463px;width:1px;height:15px;background:#f4f7fc"></div>
<div class="t" style="left:996px;top:463px;">Error Disposition</div>
<div class="t" style="left:1197px;top:463px;">Flag, Log</div>
<div class="a" style="left:992px;top:494px;width:441px;height:1px;background:#f4f7fc"></div>
<div class="a" style="left:1192px;top:479px;width:1px;height:15px;background:#f4f7fc"></div>
<div class="t" style="left:996px;top:479px;">Maximum Consecutive Errors</div>
<div class="t" style="left:1197px;top:479px;">0</div>
<div class="a" style="left:992px;top:510px;width:441px;height:1px;background:#f4f7fc"></div>
<div class="a" style="left:1192px;top:495px;width:1px;height:15px;background:#f4f7fc"></div>
<div class="t" style="left:996px;top:495px;color:#8d8d8d">Concurrency Mode</div>
<div class="t" style="left:1197px;top:495px;color:#8d8d8d">Multiple</div>
<div class="a" style="left:992px;top:431px;width:200px;height:15px;background:#3399ff"></div>
<div class="t" style="left:996px;top:431px;color:#fff">Export Settings</div>
<div class="a" style="left:1195px;top:416px;width:20px;height:13px;background:#fff;border:1px solid #111;overflow:hidden"><svg style="left:2px;top:-3px" width="14" height="14"><use href="#export"/></svg></div>
<div class="t b" style="left:1224px;top:415px;">Unmapped Export</div>
<div class="a" style="left:1417px;top:432px;width:15px;height:13px;background:#f0f0f0;border:1px solid #333"></div>
<div class="t" style="left:1419px;top:431px;font-size:10px;letter-spacing:0;font-weight:bold">...</div>
<div class="help" style="left:970px;top:657px;width:464px;height:147px"></div>
<div class="a" style="left:1415px;top:659px;width:18px;height:145px;background:#efefef"></div>
<div class="a" style="left:1416px;top:693px;width:15px;height:47px;background:#cdcdcd"></div>
<svg style="left:1418px;top:676px" width="12" height="8"><path d="M0.8,7.5 l5.2,-5.2 l5.2,5.2" fill="none" stroke="#5e5e5e" stroke-width="3"/></svg>
<svg style="left:1418px;top:777px" width="12" height="8"><path d="M0.8,1 l5.2,5.2 l5.2,-5.2" fill="none" stroke="#5e5e5e" stroke-width="3"/></svg>
<div class="s b" style="left:975px;top:665px">Export Settings</div>
<div class="s" style="left:975px;top:684px"><b><i>Type:</i></b> <i class="lk">Export Provider</i></div>
<div class="s" style="left:975px;top:703px">The configurable properties for the selected <span class="lk">Export Provider</span>.</div>
<div class="s b" style="left:975px;top:722px">Current Value: <span class="lk">Unmapped Export</span></div>
<div class="s" style="left:975px;top:739px;height:64px;overflow:hidden">Exports content over a <span class="lk">CMIS Connection</span> as simple folder and file objects. Unmapped<br>Export is designed for use with <span class="lk">CMIS Repositories</span> which expose a hierarchical file system<br>(HFS), where folders and files are represented by simple types, and do not require mapped<br>property values at creation time. For example, the <span class="lk">NTFS</span>, <span class="lk">FTP</span>, <span class="lk">SFTP</span>, <span class="lk">OneDrive</span>, <span class="lk">IMAP</span>,<br>and <span class="lk">Exchange</span> bindings expose simple HFS repositories which are suitable for use with</div>
<div class="a" style="left:264px;top:162px;width:665px;height:479px;background:rgb(242,238,18);mix-blend-mode:multiply"></div>
<div class="a" style="left:984px;top:423px;width:223px;height:30px;background:rgb(242,238,18);mix-blend-mode:multiply"></div>
<div class="a" style="left:1408px;top:423px;width:30px;height:30px;background:rgb(242,238,18);mix-blend-mode:multiply"></div>
<div class="a" style="left:287px;top:178px;width:616px;height:439px;background:#66c9e9;border:1px solid #333"></div>
<svg style="left:297px;top:185px" width="16" height="16"><use href="#export"/></svg>
<div class="t" style="left:534px;top:183px;font-size:15px;line-height:20px;letter-spacing:0;color:#111">Unmapped Export</div>
<div class="a" style="left:822px;top:178px;width:29px;height:22px;background:#66c9e9;border:1px solid #333"></div>
<div class="t b" style="left:823px;top:182px;width:30px;text-align:center;font-size:13px">?</div>
<div class="a" style="left:850px;top:178px;width:47px;height:22px;background:#c45a4f;border:1px solid #333"></div>
<svg style="left:869px;top:185px" width="10" height="9"><path d="M1,1 l7.5,7 M8.5,1 l-7.5,7" stroke="#000" stroke-width="2.4"/></svg>
<div class="a" style="left:295px;top:208px;width:600px;height:27px;background:linear-gradient(#fdfdfd,#efefef);border-bottom:1px solid #9d9d9d"></div>
<svg style="left:298px;top:213px" width="16" height="16"><use href="#okg"/></svg>
<div class="t g" style="left:316px;top:213px;font-size:12px;letter-spacing:-0.2px">OK</div>
<svg style="left:340px;top:213px" width="16" height="16"><use href="#cancel"/></svg>
<div class="t" style="left:359px;top:213px;font-size:12px;letter-spacing:-0.3px">Cancel</div>
<div class="a" style="left:295px;top:235px;width:600px;height:234px;background:#fff"></div>
<div class="a" style="left:295px;top:235px;width:600px;height:234px;background:#fff;border:1px solid #fff"></div>
<div class="a" style="left:296px;top:236px;width:21px;height:128px;background:#f4f7fc"></div>
<div class="a" style="left:296px;top:235px;width:598px;height:17px;background:#f4f7fc"></div>
<svg style="left:304px;top:241px" width="7" height="7"><path d="M6,0.5 v5.5 h-5.5z" fill="#9a9a9a" stroke="#404040" stroke-width="0.9"/></svg>
<div class="t b" style="left:321px;top:236px;">General</div>
<div class="a" style="left:317px;top:267px;width:577px;height:1px;background:#f4f7fc"></div>
<div class="a" style="left:585px;top:252px;width:1px;height:15px;background:#f4f7fc"></div>
<div class="t" style="left:321px;top:252px;">CMIS Repository</div>
<div class="a" style="left:317px;top:283px;width:577px;height:1px;background:#f4f7fc"></div>
<div class="a" style="left:585px;top:268px;width:1px;height:15px;background:#f4f7fc"></div>
<div class="t" style="left:321px;top:268px;">Update Link</div>
<div class="t" style="left:590px;top:268px;">True</div>
<div class="a" style="left:296px;top:284px;width:598px;height:16px;background:#f4f7fc"></div>
<svg style="left:304px;top:289px" width="7" height="7"><path d="M6,0.5 v5.5 h-5.5z" fill="#9a9a9a" stroke="#404040" stroke-width="0.9"/></svg>
<div class="t b" style="left:321px;top:284px;">Export Options</div>
<div class="a" style="left:317px;top:315px;width:577px;height:1px;background:#f4f7fc"></div>
<div class="a" style="left:585px;top:300px;width:1px;height:15px;background:#f4f7fc"></div>
<svg style="left:305px;top:303px" width="6" height="10"><path d="M0.5,0.5 l4.5,4.5 l-4.5,4.5z" fill="#fff" stroke="#444" stroke-width="0.9"/></svg>
<div class="t" style="left:321px;top:300px;">Content Format</div>
<div class="t" style="left:590px;top:300px;">Native</div>
<div class="a" style="left:317px;top:331px;width:577px;height:1px;background:#f4f7fc"></div>
<div class="a" style="left:585px;top:316px;width:1px;height:15px;background:#f4f7fc"></div>
<div class="t" style="left:321px;top:316px;">Metadata Export</div>
<div class="t" style="left:590px;top:316px;">(none)</div>
<div class="a" style="left:317px;top:347px;width:577px;height:1px;background:#f4f7fc"></div>
<div class="a" style="left:585px;top:332px;width:1px;height:15px;background:#f4f7fc"></div>
<div class="t" style="left:321px;top:332px;">Path Cloning</div>
<div class="t" style="left:590px;top:332px;">Disabled</div>
<div class="a" style="left:317px;top:363px;width:577px;height:1px;background:#f4f7fc"></div>
<div class="a" style="left:585px;top:348px;width:1px;height:15px;background:#f4f7fc"></div>
<div class="t" style="left:321px;top:348px;">Ignore Mapped Items</div>
<div class="t" style="left:590px;top:348px;">False</div>
<div class="a" style="left:295px;top:468px;width:600px;height:1px;background:#a0a0a0"></div>
<div class="a" style="left:295px;top:469px;width:600px;height:3px;background:#ececec"></div>
<div class="a" style="left:295px;top:472px;width:600px;height:3px;background:#6e6e6e"></div>
<div class="a" style="left:295px;top:475px;width:600px;height:134px;background:#e7e7e7;border-left:2px solid #6e6e6e"></div>
<div class="a" style="left:876px;top:475px;width:18px;height:134px;background:#efefef"></div>
<div class="a" style="left:877px;top:509px;width:15px;height:44px;background:#cdcdcd"></div>
<svg style="left:879px;top:492px" width="12" height="8"><path d="M0.8,7.5 l5.2,-5.2 l5.2,5.2" fill="none" stroke="#5e5e5e" stroke-width="3"/></svg>
<svg style="left:879px;top:581px" width="12" height="8"><path d="M0.8,1 l5.2,5.2 l5.2,-5.2" fill="none" stroke="#5e5e5e" stroke-width="3"/></svg>
<div class="a" style="left:295px;top:608px;width:600px;height:1px;background:#fff"></div>
<svg style="left:300px;top:480px" width="16" height="16"><use href="#export"/></svg>
<div class="s b" style="left:322px;top:481px"><span class="lk">Unmapped Export</span></div>
<div class="s" style="left:300px;top:500px">Exports content over a <span class="lk">CMIS Connection</span> as simple folder and file objects.</div>
<div class="s b" style="left:300px;top:519px">Remarks</div>
<div class="s" style="left:300px;top:535px">Unmapped Export is designed for use with <span class="lk">CMIS Repositories</span> which expose a hierarchical file system (HFS), where<br>folders and files are represented by simple types, and do not require mapped property values at creation time. For<br>example, the <span class="lk">NTFS</span>, <span class="lk">FTP</span>, <span class="lk">SFTP</span>, <span class="lk">OneDrive</span>, <span class="lk">IMAP</span>, and <span class="lk">Exchange</span> bindings expose simple HFS repositories which are<br>suitable for use with Unmapped Export.</div>
<div class="s b" style="left:300px;top:596px;height:13px;overflow:hidden">See Also</div>
<svg style="left:0;top:0" width="1440" height="814">
<defs><filter id="sh" x="-30%" y="-30%" width="160%" height="160%"><feGaussianBlur in="SourceAlpha" stdDeviation="1.6"/><feOffset dx="2.5" dy="2.5"/><feComponentTransfer><feFuncA type="linear" slope="0.55"/></feComponentTransfer><feMerge><feMergeNode/><feMergeNode in="SourceGraphic"/></feMerge></filter></defs>
<g filter="url(#sh)" fill="#f7941d">
 <path d="M177,201.5 L270,201.5 L270,194 L302,204 L270,214 L270,206.5 L177,206.5z"/>
 <circle cx="177" cy="204" r="19.5"/>
</g>
<g filter="url(#sh)" fill="#f7941d">
 <path d="M1026.5,570 L1026.5,477 L1019,477 L1029,445 L1039,477 L1031.5,477 L1031.5,570z"/>
 <circle cx="1029" cy="571" r="19.5"/>
</g>
<g filter="url(#sh)" fill="#f7941d">
 <path d="M1330.2,528.2 L1396.6,461.8 L1391,457 L1420,443 L1406,472 L1401.2,466.2 L1333.8,531.8z"/>
 <circle cx="1332" cy="530" r="19.5"/>
</g>
<g fill="#fff" stroke="#fff" stroke-width="0.9" font-family="Liberation Sans" font-weight="bold" font-size="23" text-anchor="middle">
 <text x="177" y="212.5">3</text>
 <text x="1029" y="579.5">1</text>
 <text x="1332" y="538.5">2</text>
</g>
</svg>
</body></html>
